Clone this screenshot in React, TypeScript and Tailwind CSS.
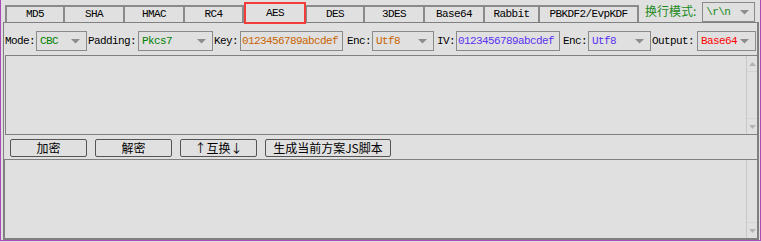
import React from 'react';

const mono = "font-[family-name:'Liberation_Mono',monospace] text-[11px] tracking-[-0.6px]";
const cjk = "font-[family-name:'Noto_Sans_CJK_SC',sans-serif]";

const tabs: { name: string; w: string; ml: string; active?: boolean }[] = [
  { name: 'MD5', w: 'w-[60px]', ml: 'ml-0' },
  { name: 'SHA', w: 'w-[62px]', ml: '-ml-[2px]' },
  { name: 'HMAC', w: 'w-[62px]', ml: '-ml-[2px]' },
  { name: 'RC4', w: 'w-[61px]', ml: '-ml-[2px]' },
  { name: 'AES', w: 'w-[62px]', ml: 'ml-0', active: true },
  { name: 'DES', w: 'w-[60px]', ml: '-ml-[1px]' },
  { name: '3DES', w: 'w-[62px]', ml: '-ml-[2px]' },
  { name: 'Base64', w: 'w-[62px]', ml: '-ml-[2px]' },
  { name: 'Rabbit', w: 'w-[57px]', ml: '-ml-[2px]' },
  { name: 'PBKDF2/EvpKDF', w: 'w-[101px]', ml: '-ml-[2px]' },
];

const Caret = () => (
  <svg width="9" height="5" viewBox="0 0 9 5" className="shrink-0">
    <path d="M0 0 H9 L4.5 4.5 Z" fill="#8c8c8c" />
  </svg>
);

const Select = ({ value, color, w }: { value: string; color: string; w: string }) => (
  <div className={`${w} h-[20px] border border-[#8a8a8a] flex items-center justify-between pl-[3px] pr-[6px] shrink-0`}>
    <span className={`${mono} ${color}`}>{value}</span>
    <Caret />
  </div>
);

const Label = ({ text, w, pl }: { text: string; w: string; pl: string }) => (
  <div className={`${w} ${pl} ${mono} text-black shrink-0 whitespace-nowrap`}>{text}</div>
);

const Field = ({ value, color, w }: { value: string; color: string; w: string }) => (
  <div className={`${w} h-[20px] border border-[#8a8a8a] flex items-center pl-[1px] shrink-0 overflow-hidden`}>
    <span className={`${mono} ${color} whitespace-nowrap`}>{value}</span>
  </div>
);

const Scrollbar = ({ up }: { up: boolean }) => (
  <div className="w-[11px] border-l border-[#c8c8c8] flex flex-col justify-between shrink-0">
    {up ? (
      <div className="h-[16px] border-b border-[#d4d4d4] flex items-center justify-center">
        <svg width="7" height="4" viewBox="0 0 7 4"><path d="M3.5 0 L7 4 H0 Z" fill="#b4b4b4" /></svg>
      </div>
    ) : (
      <div className="h-[16px]" />
    )}
    <div className="h-[16px] border-t border-[#d4d4d4] flex items-center justify-center">
      <svg width="7" height="4" viewBox="0 0 7 4"><path d="M0 0 H7 L3.5 4 Z" fill="#b4b4b4" /></svg>
    </div>
  </div>
);

const Btn = ({ text, w }: { text: string; w: string }) => (
  <button className={`${w} h-[18px] border border-[#555] rounded-[2px] bg-[#e0e0e0] flex items-center justify-center text-[12px] text-black ${cjk} leading-none`}>
    {text}
  </button>
);

export default function App() {
  return (
    <div className="w-[761px] h-[242px] bg-[#e0e0e0]">
      <div className="h-[241px] border-x border-b border-[#a94bb5] flex flex-col">
        {/* Tabs */}
        <div className="h-[22px] flex items-end pl-[4px] shrink-0">
          {tabs.map((t) =>
            t.active ? (
              <div
                key={t.name}
                className={`${t.w} ${t.ml} h-[22px] mb-[-2px] border-2 border-[#f23b3b] flex items-center justify-center z-10 shrink-0`}
              >
                <span className={`${mono} text-black`}>{t.name}</span>
              </div>
            ) : (
              <div
                key={t.name}
                className={`${t.w} ${t.ml} h-[17px] border-x-2 border-t-2 border-[#8a8a8a] flex items-center justify-center shrink-0`}
              >
                <span className={`${mono} text-black`}>{t.name}</span>
              </div>
            )
          )}
          <div className={`ml-[6px] self-center text-[12px] text-[#1a8a1a] ${cjk} whitespace-nowrap`}>换行模式:</div>
          <div className="ml-[6px] self-start mt-[2px] w-[53px] h-[20px] border border-[#8a8a8a] flex items-center justify-between pl-[3px] pr-[5px]">
            <span className={`${mono} text-[#1a8a1a]`}>\r\n</span>
            <Caret />
          </div>
        </div>

        {/* Panel */}
        <div className="flex-1 ml-[2px] mr-[1px] border-l border-t border-r-2 border-b-2 border-[#808080] flex flex-col min-h-0">
          <div className="flex items-center mt-[8px] h-[20px] pl-[1px] shrink-0">
            <Label text="Mode:" w="w-[31px]" pl="pl-0" />
            <Select value="CBC" color="text-[#008000]" w="w-[51px]" />
            <Label text="Padding:" w="w-[51px]" pl="pl-[1px]" />
            <Select value="Pkcs7" color="text-[#008000]" w="w-[75px]" />
            <Label text="Key:" w="w-[27px]" pl="pl-[1px]" />
            <Field value="0123456789abcdef" color="text-[#c86400]" w="w-[103px]" />
            <Label text="Enc:" w="w-[29px]" pl="pl-[4px]" />
            <Select value="Utf8" color="text-[#c86400]" w="w-[62px]" />
            <Label text="IV:" w="w-[22px]" pl="pl-[3px]" />
            <Field value="0123456789abcdef" color="text-[#5a32f0]" w="w-[104px]" />
            <Label text="Enc:" w="w-[28px]" pl="pl-[3px]" />
            <Select value="Utf8" color="text-[#5a32f0]" w="w-[63px]" />
            <Label text="Output:" w="w-[46px]" pl="pl-[1px]" />
            <Select value="Base64" color="text-[#ff0000]" w="w-[59px]" />
          </div>

          {/* Input textarea */}
          <div className="mt-[4px] ml-[1px] h-[80px] border-l border-y border-[#808080] flex justify-end shrink-0">
            <Scrollbar up />
          </div>

          {/* Buttons */}
          <div className="flex items-center gap-[8px] mt-[4px] pl-[6px] shrink-0">
            <Btn text="加密" w="w-[77px]" />
            <Btn text="解密" w="w-[77px]" />
            <Btn text="↑互换↓" w="w-[77px]" />
            <Btn text="生成当前方案JS脚本" w="w-[126px]" />
          </div>

          {/* Output textarea */}
          <div className="mt-[2px] flex-1 border-l border-t border-[#808080] flex justify-end min-h-0">
            <Scrollbar up={false} />
          </div>
        </div>
      </div>
    </div>
  );
}
